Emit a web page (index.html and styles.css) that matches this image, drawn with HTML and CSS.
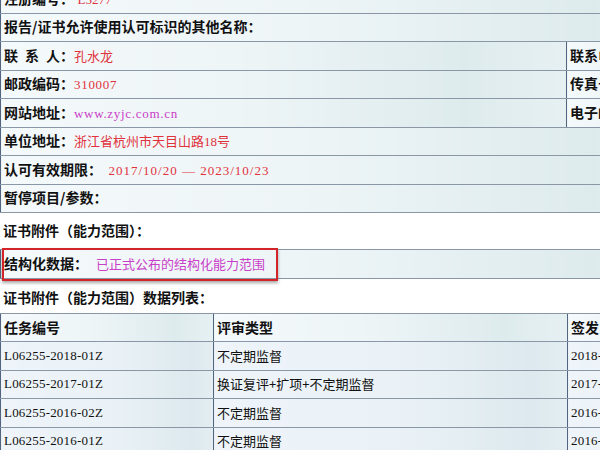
FILE: index.html
```html
<!DOCTYPE html>
<html lang="zh-CN">
<head>
  <meta charset="UTF-8">
  <title>认可证书信息</title>
  <link rel="stylesheet" href="styles.css">
</head>
<body>
  <table class="info">
    <colgroup><col class="c-main"><col class="c-side"></colgroup>
    <tr><td colspan="2"><b>注册编号：</b> <span class="red">L5277</span></td></tr>
    <tr><td colspan="2"><b>报告/证书允许使用认可标识的其他名称：</b></td></tr>
    <tr>
      <td><b>联&ensp;系&ensp;人：</b><span class="red">孔水龙</span></td>
      <td class="side"><b>联系电话：</b></td>
    </tr>
    <tr>
      <td><b>邮政编码：</b><span class="red wide">310007</span></td>
      <td class="side"><b>传真号码：</b></td>
    </tr>
    <tr>
      <td><b>网站地址：</b><span class="pink wide">www.zyjc.com.cn</span></td>
      <td class="side"><b>电子邮件：</b></td>
    </tr>
    <tr><td colspan="2"><b>单位地址：</b><span class="red">浙江省杭州市天目山路18号</span></td></tr>
    <tr><td colspan="2"><b>认可有效期限：</b> <span class="red wide date">2017/10/20 — 2023/10/23</span></td></tr>
    <tr><td colspan="2"><b>暂停项目/参数：</b></td></tr>
  </table>

  <div class="title">证书附件（能力范围）：</div>

  <div class="struct-wrap">
    <table class="struct">
      <tr><td><b>结构化数据：</b><span class="pink gap">已正式公布的结构化能力范围</span></td></tr>
    </table>
    <div class="mark"></div>
  </div>

  <div class="title second">证书附件（能力范围）数据列表：</div>

  <table class="list">
    <colgroup><col class="c-code"><col class="c-type"><col class="c-date"></colgroup>
    <tr class="head"><td>任务编号</td><td>评审类型</td><td>签发日期</td></tr>
    <tr><td class="mono">L06255-2018-01Z</td><td>不定期监督</td><td class="mono">2018-05-14</td></tr>
    <tr><td class="mono">L06255-2017-01Z</td><td>换证复评+扩项+不定期监督</td><td class="mono">2017-10-20</td></tr>
    <tr><td class="mono">L06255-2016-02Z</td><td>不定期监督</td><td class="mono">2016-11-08</td></tr>
    <tr><td class="mono">L06255-2016-01Z</td><td>不定期监督</td><td class="mono">2016-04-22</td></tr>
  </table>
</body>
</html>
```

FILE: styles.css
```css
html, body {
  margin: 0;
  overflow: hidden;
  background-color: #fff;
}

body {
  width: 600px;
  height: 450px;
  font-family: "Liberation Serif", "Noto Sans CJK SC", serif;
  font-size: 14px;
  color: #111;
}

table {
  border-collapse: collapse;
  table-layout: fixed;
  width: 720px;
}

td {
  height: 27.5px;
  padding: 0 3px;
  border-top: 1px solid #8a97a7;
  border-bottom: 1px solid #8a97a7;
  border-left: 1px solid #52647f;
  background: linear-gradient(to right, #f4f9fb 0%, #eef5f7 40%, #deebed 82%, #e6f0f2 100%);
  white-space: nowrap;
  overflow: hidden;
  line-height: 20px;
}

b {
  font-weight: 700;
  font-family: "Noto Sans CJK SC", sans-serif;
}

.info {
  margin-top: -16px;
}

.c-main { width: 566px; }
.c-side { width: 154px; }

.red {
  color: #e0323c;
  font-size: 13px;
}

.pink {
  color: #c840c8;
  font-size: 13px;
}

.wide {
  letter-spacing: 0.7px;
}

.date {
  letter-spacing: 1px;
  margin-left: 3px;
}

.gap {
  margin-left: 8px;
}

.title {
  height: 36px;
  line-height: 34px;
  padding-left: 3px;
  font-weight: 700;
  font-family: "Noto Sans CJK SC", sans-serif;
}

.title.second {
  height: 34px;
  line-height: 36px;
}

.struct-wrap {
  position: relative;
}

.mark {
  position: absolute;
  left: 2px;
  top: -1px;
  width: 272px;
  height: 29px;
  border: 2px solid #d3242a;
  box-shadow: 0 2px 3px rgba(0, 0, 0, 0.35);
}

.c-code { width: 213px; }
.c-type { width: 354px; }
.c-date { width: 153px; }

.list td {
  font-size: 13px;
  font-family: "Noto Sans CJK SC", sans-serif;
  background: linear-gradient(to right, #eef4f9 0%, #eaf2f7 50%, #dde9ee 90%, #e4eef2 100%);
}

.list .head td {
  font-size: 14px;
  font-weight: 700;
  background: linear-gradient(to right, #f4f9fb 0%, #eef5f7 40%, #deebed 82%, #e6f0f2 100%);
}

.list td.mono {
  font-family: "Liberation Serif", serif;
  letter-spacing: 0.2px;
}
```
